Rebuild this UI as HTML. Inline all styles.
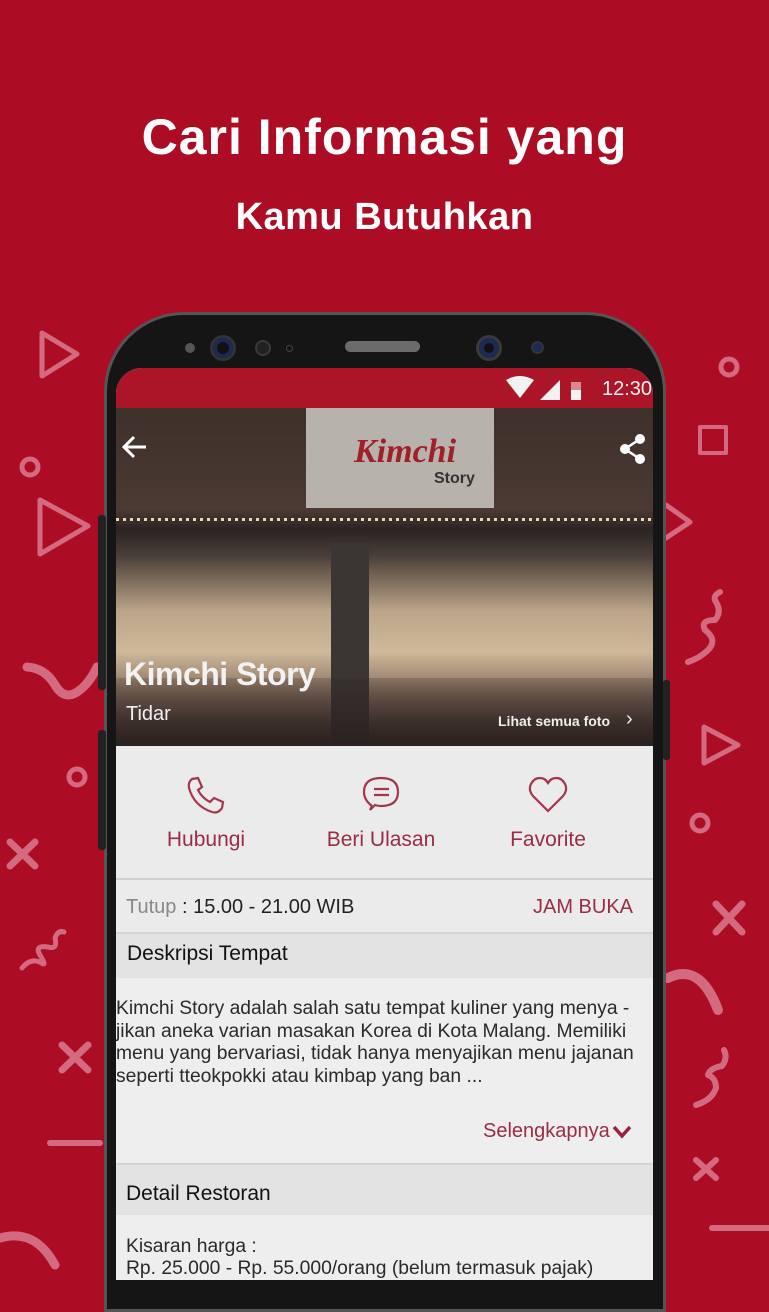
<!DOCTYPE html>
<html><head><meta charset="utf-8"><style>
*{margin:0;padding:0;box-sizing:border-box}
body{width:769px;height:1280px;overflow:hidden;background:#ad0d24;font-family:"Liberation Sans",Arial,sans-serif;position:relative}
.t{position:absolute;left:0;width:769px;text-align:center;color:#fff;font-weight:bold}
.abs{position:absolute}
.phone{position:absolute;left:104px;top:312px;width:562px;height:1000px;background:#151515;border-radius:80px 80px 0 0;border:3px solid #555}
.screen{position:absolute;left:116px;top:368px;width:537px;height:912px;background:#e9e9e9;overflow:hidden;border-radius:26px 26px 0 0}
.lbl{position:absolute;color:#9b2c45;font-size:21px;text-align:center}
</style></head><body>
<div class="t" style="top:108px;font-size:50px;letter-spacing:1px">Cari Informasi yang</div>
<div class="t" style="top:196px;font-size:38px;letter-spacing:0.5px">Kamu Butuhkan</div>

<svg class="abs" style="left:0;top:0" width="769" height="1280" fill="none" stroke="#d36a80" stroke-width="5" stroke-linecap="round" stroke-linejoin="round">
<path d="M42 333 L77 354 L42 376 Z"/>
<circle cx="30" cy="467" r="8"/>
<path d="M40 500 L88 526 L40 554 Z"/>
<path d="M27 667 Q45 668 55 685 Q65 702 80 690 Q90 682 97 667" stroke-width="9"/>
<circle cx="77" cy="777" r="8"/>
<path d="M10 842 L35 866 M35 842 L10 866" stroke-width="7"/>
<path d="M22 968 Q30 958 40 962 Q48 968 40 955 Q34 945 48 947 Q58 950 55 938 Q58 930 64 932"/>
<path d="M62 1045 L88 1070 M88 1045 L62 1070" stroke-width="7"/>
<path d="M50 1143 L100 1143" stroke-width="6"/>
<path d="M0 1238 Q35 1228 55 1265" stroke-width="9"/>
<circle cx="729" cy="367" r="8"/>
<rect x="700" y="427" width="26" height="26" stroke-width="4"/>
<path d="M666 505 L690 522 L666 538"/>
<path d="M688 662 Q700 658 708 650 Q718 640 705 630 Q700 620 715 620 Q722 612 716 602 Q712 596 720 592" stroke-width="6"/>
<path d="M704 727 L738 745 L704 763 Z"/>
<circle cx="700" cy="823" r="8"/>
<path d="M716 904 L742 932 M742 904 L716 932" stroke-width="7"/>
<path d="M668 978 Q700 962 718 1010" stroke-width="10"/>
<path d="M696 1105 Q712 1100 716 1088 Q716 1078 708 1075 Q710 1068 722 1066 Q728 1058 724 1050" stroke-width="6"/>
<path d="M696 1160 L716 1178 M716 1160 L696 1178" stroke-width="6"/>
<path d="M712 1228 L769 1228" stroke-width="6"/>
</svg>

<div class="phone"></div>
<div class="abs" style="left:98px;top:515px;width:8px;height:175px;background:#222;border-radius:3px"></div>
<div class="abs" style="left:98px;top:730px;width:8px;height:120px;background:#222;border-radius:3px"></div>
<div class="abs" style="left:663px;top:680px;width:7px;height:80px;background:#222;border-radius:3px"></div>
<div class="abs" style="left:185px;top:343px;width:10px;height:10px;border-radius:50%;background:#555"></div>
<div class="abs" style="left:210px;top:335px;width:26px;height:26px;border-radius:50%;background:#111;border:3px solid #333;box-shadow:inset 0 0 0 4px #1c2a55"></div>
<div class="abs" style="left:255px;top:340px;width:16px;height:16px;border-radius:50%;background:#222;border:2px solid #3a3a3a"></div>
<div class="abs" style="left:286px;top:345px;width:7px;height:7px;border-radius:50%;border:1px solid #444"></div>
<div class="abs" style="left:345px;top:341px;width:75px;height:11px;border-radius:6px;background:#6b6b6b"></div>
<div class="abs" style="left:476px;top:335px;width:26px;height:26px;border-radius:50%;background:#111;border:3px solid #3a3a3a;box-shadow:inset 0 0 0 5px #1c2a55"></div>
<div class="abs" style="left:531px;top:341px;width:13px;height:13px;border-radius:50%;background:#1c2a55;border:2px solid #333"></div>

<div class="screen">
 <div class="abs" style="left:0;top:0;width:537px;height:40px;background:#ac1528"></div>
 <svg class="abs" style="left:390px;top:8px" width="80" height="26"><path d="M0 4 Q14 -4 28 4 L14 22Z" fill="#f2f2f2"/><path d="M34 24 L54 4 L54 24Z" fill="#f2f2f2"/><rect x="65" y="6" width="10" height="18" fill="#d48a90"/><rect x="65" y="14" width="10" height="10" fill="#f2f2f2"/></svg>
 <div class="abs" style="left:486px;top:10px;color:#f2f2f2;font-size:20px">12:30</div>
 <div class="abs" style="left:0;top:40px;width:537px;height:338px;background:linear-gradient(180deg,#3e302a 0%,#4a3a33 30%,#2a2422 36%,#4b4039 44%,#bba488 60%,#cfb99a 72%,#8a7262 84%,#3d322e 100%)"></div>
 <div class="abs" style="left:190px;top:40px;width:188px;height:100px;background:#b8b2ad"></div>
 <div class="abs" style="left:238px;top:65px;font-family:'Liberation Serif',serif;font-style:italic;font-weight:bold;font-size:34px;color:#a0202a">Kimchi</div>
 <div class="abs" style="left:318px;top:102px;font-size:16px;font-weight:bold;color:#333">Story</div>
 <div class="abs" style="left:0;top:150px;width:537px;height:3px;background:repeating-linear-gradient(90deg,#e8d8b0 0 3px,transparent 3px 7px)"></div>
 <div class="abs" style="left:215px;top:175px;width:38px;height:203px;background:#3b3634"></div>
 <div class="abs" style="left:0;top:310px;width:537px;height:68px;background:linear-gradient(180deg,rgba(40,30,28,0.2),rgba(40,30,28,0.85))"></div>
 <svg class="abs" style="left:4px;top:66px" width="30" height="26" fill="none" stroke="#fff" stroke-width="3"><path d="M26 13H4M14 3L4 13L14 23"/></svg>
 <svg class="abs" style="left:504px;top:66px" width="26" height="30" fill="#fff"><circle cx="20" cy="5" r="5"/><circle cx="5" cy="15" r="5"/><circle cx="20" cy="25" r="5"/><path d="M20 5L5 15L20 25" stroke="#fff" stroke-width="2.5" fill="none"/></svg>
 <div class="abs" style="left:8px;top:288px;color:#f2f2f2;font-size:32px;font-weight:bold;letter-spacing:-0.5px">Kimchi Story</div>
 <div class="abs" style="left:10px;top:335px;color:#f0f0f0;font-size:20px">Tidar</div>
 <div class="abs" style="left:382px;top:345px;color:#eee;font-size:14px;font-weight:bold">Lihat semua foto</div>
 <div class="abs" style="left:510px;top:340px;color:#eee;font-size:20px">›</div>
 <div class="abs" style="left:0;top:378px;width:537px;height:132px;background:#ebebeb"></div>
 <svg class="abs" style="left:70px;top:408px" width="40" height="40" fill="none" stroke="#a5354c" stroke-width="2.2"><path d="M6 3 L12 2 L16 11 L12 14 Q16 22 24 26 L28 22 L37 26 L36 32 Q32 38 26 36 Q8 30 3 12 Q2 6 6 3Z"/></svg>
 <svg class="abs" style="left:246px;top:406px" width="40" height="40" fill="none" stroke="#a5354c" stroke-width="2.2"><path d="M10 32 Q2 26 2 18 Q2 4 19 4 Q36 4 36 18 Q36 32 19 32 Q16 32 13 31 L8 36 Z"/><path d="M12 15H27M12 21H27"/></svg>
 <svg class="abs" style="left:412px;top:408px" width="40" height="38" fill="none" stroke="#a5354c" stroke-width="2.2"><path d="M20 35 L5 20 Q0 14 3 8 Q6 2 12 2 Q17 2 20 7 Q23 2 28 2 Q34 2 37 8 Q40 14 35 20 Z"/></svg>
 <div class="lbl" style="left:20px;top:460px;width:140px">Hubungi</div>
 <div class="lbl" style="left:190px;top:460px;width:150px">Beri Ulasan</div>
 <div class="lbl" style="left:362px;top:460px;width:140px">Favorite</div>
 <div class="abs" style="left:0;top:510px;width:537px;height:2px;background:#d0d0d0"></div>
 <div class="abs" style="left:0;top:512px;width:537px;height:52px;background:#ebebeb"></div>
 <div class="abs" style="left:10px;top:528px;font-size:20px;color:#222"><span style="color:#888">Tutup</span> : 15.00 - 21.00 WIB</div>
 <div class="abs" style="left:417px;top:528px;font-size:20px;color:#9b2c45">JAM BUKA</div>
 <div class="abs" style="left:0;top:564px;width:537px;height:2px;background:#d4d4d4"></div>
 <div class="abs" style="left:0;top:566px;width:537px;height:44px;background:#e3e3e3"></div>
 <div class="abs" style="left:11px;top:574px;font-size:21px;color:#111">Deskripsi Tempat</div>
 <div class="abs" style="left:0;top:610px;width:537px;height:185px;background:#eeeeee;box-shadow:0 3px 4px rgba(0,0,0,0.12)"></div>
 <div class="abs" style="left:0;top:630px;width:537px;font-size:19.3px;line-height:22.5px;color:#2a2a2a">Kimchi Story adalah salah satu tempat kuliner yang menya -<br>jikan aneka varian masakan Korea di Kota Malang. Memiliki<br>menu yang bervariasi, tidak hanya menyajikan menu jajanan<br>seperti tteokpokki atau kimbap yang ban ...</div>
 <div class="abs" style="left:367px;top:752px;font-size:20px;color:#9b2c45">Selengkapnya</div>
 <svg class="abs" style="left:495px;top:756px" width="22" height="16" fill="none" stroke="#9b2040" stroke-width="3.5"><path d="M3 3L11 12L19 3"/></svg>
 <div class="abs" style="left:0;top:797px;width:537px;height:50px;background:#e3e3e3"></div>
 <div class="abs" style="left:10px;top:814px;font-size:21px;color:#111">Detail Restoran</div>
 <div class="abs" style="left:0;top:847px;width:537px;height:70px;background:#eeeeee"></div>
 <div class="abs" style="left:10px;top:868px;font-size:19.3px;line-height:22px;color:#2a2a2a">Kisaran harga :<br>Rp. 25.000 - Rp. 55.000/orang (belum termasuk pajak)</div>
</div>
</body></html>
